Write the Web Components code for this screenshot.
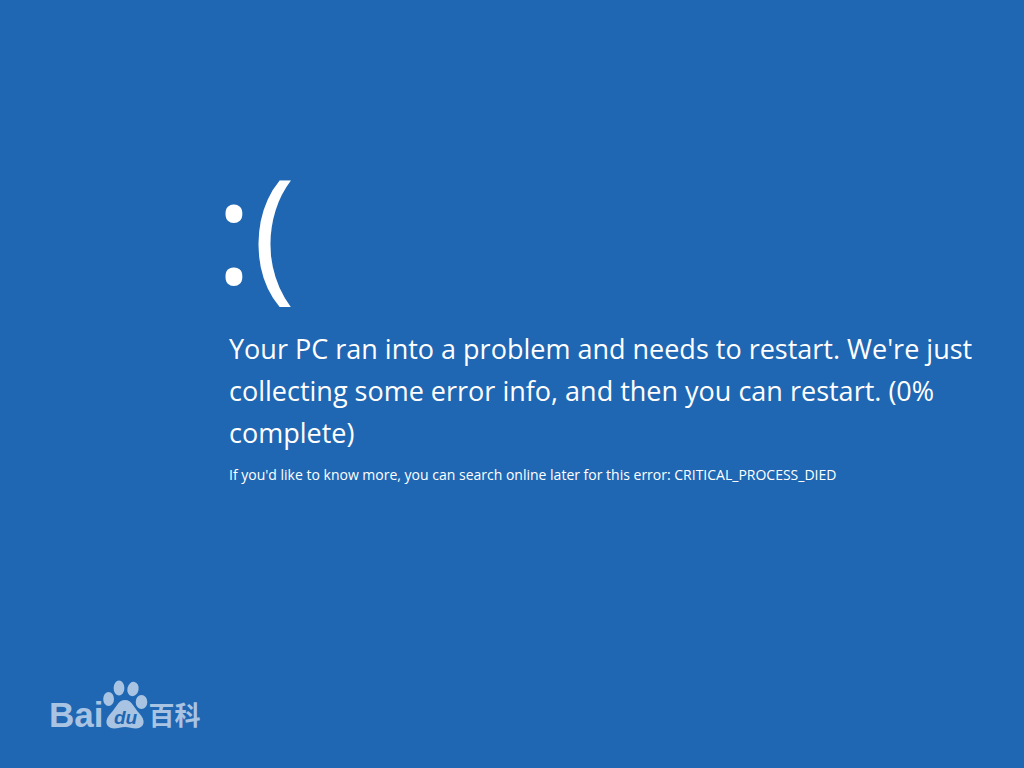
<!DOCTYPE html>
<html lang="en">
<head>
<meta charset="utf-8">
<title>Restart required</title>
<style>
  body { margin: 0; background: #1f67b3; }
</style>
</head>
<body>
<stop-screen>
  <sad-face slot="face"></sad-face>
  <stop-message>
    Your PC ran into a problem and needs to restart. We're just collecting some error info, and then you can restart. (0% complete)
    <span slot="detail">If you'd like to know more, you can search online later for this error: CRITICAL_PROCESS_DIED</span>
  </stop-message>
  <baike-logo slot="logo"></baike-logo>
</stop-screen>
<script>
  class StopScreen extends HTMLElement {
    constructor() {
      super();
      this.attachShadow({ mode: "open" }).innerHTML = `
        <style>
          :host { display: flex; flex-direction: column; box-sizing: border-box; min-height: 100vh;
            background: #1f67b3; color: #fff; font-family: "Open Sans", "Noto Sans", sans-serif; }
          main { flex: 1; padding: 148px 40px 0 229px; }
          footer { padding: 0 49px 39px; }
        </style>
        <main><slot name="face"></slot><slot></slot></main>
        <footer><slot name="logo"></slot></footer>`;
    }
  }
  class SadFace extends HTMLElement {
    constructor() {
      super();
      this.attachShadow({ mode: "open" }).innerHTML = `
        <style>
          :host { display: block; margin: 0 0 20px -14px; font-size: 144px; line-height: 160px; }
        </style>
        <span>:(</span>`;
    }
  }
  class StopMessage extends HTMLElement {
    constructor() {
      super();
      this.attachShadow({ mode: "open" }).innerHTML = `
        <style>
          :host { display: block; }
          h1 { margin: 0; font-size: 27px; line-height: 42px; font-weight: 400; }
          p { margin: 11px 0 0; font-size: 14px; line-height: 20px; }
        </style>
        <h1><slot></slot></h1>
        <p><slot name="detail"></slot></p>`;
    }
  }
  class BaikeLogo extends HTMLElement {
    constructor() {
      super();
      this.attachShadow({ mode: "open" }).innerHTML = `
        <style>
          :host { display: flex; align-items: flex-end; color: #a9c4e3; }
          .bai { font: 700 35px/28px "Liberation Sans", sans-serif; }
          .baike { font: 700 26px/30px "Noto Sans CJK SC", sans-serif; }
          svg { display: block; fill: currentColor; }
          text { font: italic 700 19px "Liberation Sans", sans-serif; fill: #1f67b3; }
        </style>
        <span class="bai">Bai</span>
        <svg width="45" height="49" viewBox="1 0 45 49" aria-hidden="true">
          <ellipse cx="6.6" cy="19" rx="5.4" ry="7"/>
          <ellipse cx="17" cy="8" rx="5.4" ry="7.4"/>
          <ellipse cx="31" cy="9" rx="5.6" ry="7.2" transform="rotate(12 31 9)"/>
          <ellipse cx="39.5" cy="22" rx="5.8" ry="7"/>
          <path d="M23 20C30 20 32 28 37 33C44 40 43 48 34 48.500C30 48.500 27 47 23 47C19 47 16 48.500 12 48.500C3 48 2 40 9 33C14 28 16 20 23 20Z"/>
          <text x="12" y="44">du</text>
        </svg>
        <span class="baike">百科</span>`;
    }
  }
  customElements.define("stop-screen", StopScreen);
  customElements.define("sad-face", SadFace);
  customElements.define("stop-message", StopMessage);
  customElements.define("baike-logo", BaikeLogo);
</script>
</body>
</html>
